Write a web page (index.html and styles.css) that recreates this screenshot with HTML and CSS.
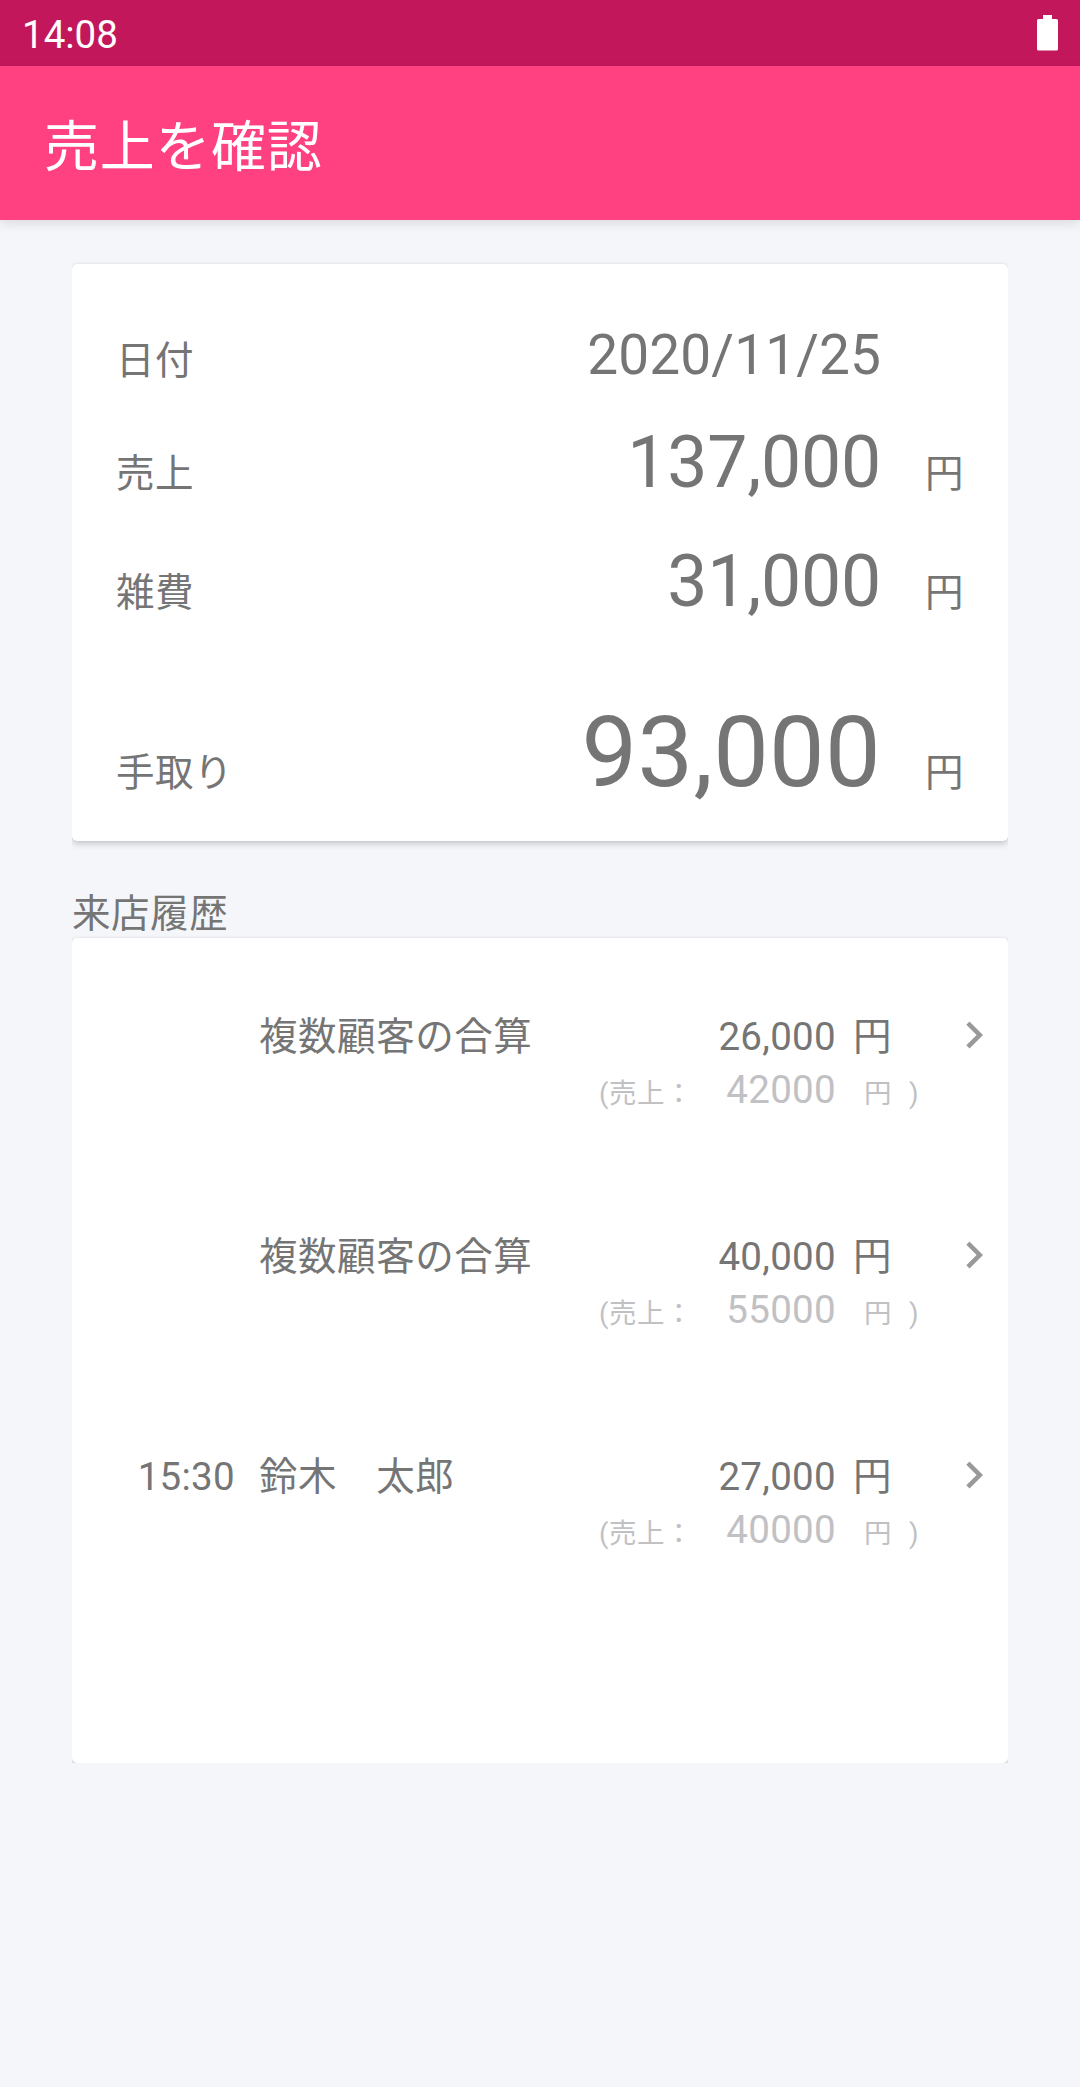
FILE: index.html
```html
<!DOCTYPE html>
<html lang="ja">
<head>
  <meta charset="UTF-8" />
  <meta name="viewport" content="width=device-width, initial-scale=1.0"/>
  <title>売上を確認</title>
  <link rel="stylesheet" href="styles.css">
</head>
<body>
  <!-- Status bar -->
  <div class="status-bar">
    <span class="clock">14:08</span>
    <svg class="battery" width="21" height="36" viewBox="0 0 21 36">
      <path d="M6 0h9v4h4.500Q21 4 21 5.500V34Q21 35.500 19.500 35.500H1.500Q0 35.500 0 34V5.500Q0 4 1.500 4H6z" fill="#fff"/>
    </svg>
  </div>

  <header class="app-bar">
    <h1>売上を確認</h1>
  </header>

  <main>
    <!-- Daily summary -->
    <section class="card summary">
      <div class="row date">
        <span class="label">日付</span>
        <span class="value">2020/11/25</span>
        <span class="unit"></span>
      </div>
      <div class="row amount">
        <span class="label">売上</span>
        <span class="value">137,000</span>
        <span class="unit">円</span>
      </div>
      <div class="row amount">
        <span class="label">雑費</span>
        <span class="value">31,000</span>
        <span class="unit">円</span>
      </div>
      <div class="row total">
        <span class="label">手取り</span>
        <span class="value">93,000</span>
        <span class="unit">円</span>
      </div>
    </section>

    <!-- Visit history -->
    <h2>来店履歴</h2>
    <section class="card history">
      <div class="visit">
        <span class="time"></span>
        <span class="name">複数顧客の合算</span>
        <div class="money">
          <div class="net"><span class="num">26,000</span><span class="yen">円</span></div>
          <div class="sales"><span class="open">(売上：</span><span class="num">42000</span><span class="yen">円</span><span class="close">)</span></div>
        </div>
        <svg class="chevron" viewBox="0 0 24 24"><path d="M10 6L8.590 7.410 13.170 12l-4.580 4.590L10 18l6-6z"/></svg>
      </div>
      <div class="visit">
        <span class="time"></span>
        <span class="name">複数顧客の合算</span>
        <div class="money">
          <div class="net"><span class="num">40,000</span><span class="yen">円</span></div>
          <div class="sales"><span class="open">(売上：</span><span class="num">55000</span><span class="yen">円</span><span class="close">)</span></div>
        </div>
        <svg class="chevron" viewBox="0 0 24 24"><path d="M10 6L8.590 7.410 13.170 12l-4.580 4.590L10 18l6-6z"/></svg>
      </div>
      <div class="visit">
        <span class="time">15:30</span>
        <span class="name">鈴木　太郎</span>
        <div class="money">
          <div class="net"><span class="num">27,000</span><span class="yen">円</span></div>
          <div class="sales"><span class="open">(売上：</span><span class="num">40000</span><span class="yen">円</span><span class="close">)</span></div>
        </div>
        <svg class="chevron" viewBox="0 0 24 24"><path d="M10 6L8.590 7.410 13.170 12l-4.580 4.590L10 18l6-6z"/></svg>
      </div>
    </section>
  </main>
</body>
</html>
```

FILE: styles.css
```css
:root {
  --primary: #ff4081;
  --primary-dark: #c2185b;
  --bg-color: #f5f6fa;
  --text-color: #757575;
  --sub-color: #c1c1c4;
}

* {
  box-sizing: border-box;
}

body {
  margin: 0;
  min-height: 100vh;
  background-color: var(--bg-color);
  color: var(--text-color);
  font-family: Roboto, "Noto Sans CJK JP", sans-serif;
  font-size: 38.5px;
  letter-spacing: 0.3px;
  line-height: 52px;
}

.status-bar {
  display: flex;
  justify-content: space-between;
  align-items: center;
  height: 66px;
  padding: 0 22px 0 22px;
  background-color: var(--primary-dark);
  color: #fff;
}

.clock {
  padding-top: 3px;
  font-size: 38.5px;
  letter-spacing: 0;
}

.app-bar {
  position: relative;
  display: flex;
  align-items: center;
  height: 154px;
  padding: 0 44px;
  background-color: var(--primary);
  box-shadow: 0 4px 10px rgba(0, 0, 0, 0.1);
}

h1 {
  margin: 7px 0 0;
  color: #fff;
  font-size: 55px;
  font-weight: 400;
  letter-spacing: 0.69px;
  line-height: 76px;
}

main {
  padding: 44px 72px 0;
}

.card {
  background-color: #fff;
  border-radius: 5px;
  box-shadow: 0 3px 6px rgba(0, 0, 0, 0.18), 0 0 2px rgba(0, 0, 0, 0.1);
  clip-path: inset(-20px 0 -20px 0);
}

.summary {
  height: 577px;
  padding: 61px 44px 0;
}

.row {
  display: flex;
  align-items: baseline;
}

.label {
  letter-spacing: 0.56px;
}

.value {
  flex: 1;
  text-align: right;
}

.unit {
  width: 39px;
  margin-left: 44px;
}

.date .value {
  font-size: 55px;
  letter-spacing: 0.1px;
  line-height: 60px;
}

.amount {
  margin-top: 39px;
}

.date + .amount {
  margin-top: 36px;
}

.amount .value {
  font-size: 71.5px;
  letter-spacing: -0.2px;
  line-height: 80px;
}

.total {
  margin-top: 75px;
}

.total .value {
  font-size: 99px;
  line-height: 110px;
}

h2 {
  margin: 48px 0 0;
  font-size: 38.5px;
  font-weight: 400;
  letter-spacing: 0.56px;
  line-height: 50px;
}

.history {
  height: 825px;
  margin-top: -1px;
  clip-path: inset(-20px 0 0 0);
}

.visit {
  display: flex;
  align-items: flex-start;
  height: 220px;
  padding: 70px 7px 0 0;
}

.time {
  width: 163px;
  margin-top: 3px;
  text-align: right;
}

.name {
  flex: 1;
  margin: 3px 0 0 24px;
  letter-spacing: 0.56px;
}

.money {
  width: 323px;
  margin-top: 3px;
}

.net, .sales {
  display: flex;
  align-items: baseline;
}

.money .num {
  flex: 1;
  text-align: right;
}

.net .yen {
  width: 39px;
  margin: 0 29px 0 17px;
}

.sales {
  margin-top: 1px;
  color: var(--sub-color);
}

.open, .close, .sales .yen {
  font-size: 27.5px;
}

.open {
  margin-left: 1px;
  letter-spacing: 0.5px;
}

.sales .yen {
  width: 28px;
  margin-left: 28px;
}

.close {
  width: 12px;
  margin-left: 17px;
}

.chevron {
  width: 54px;
  height: 54px;
  margin-left: 26px;
  fill: #999;
}
```
